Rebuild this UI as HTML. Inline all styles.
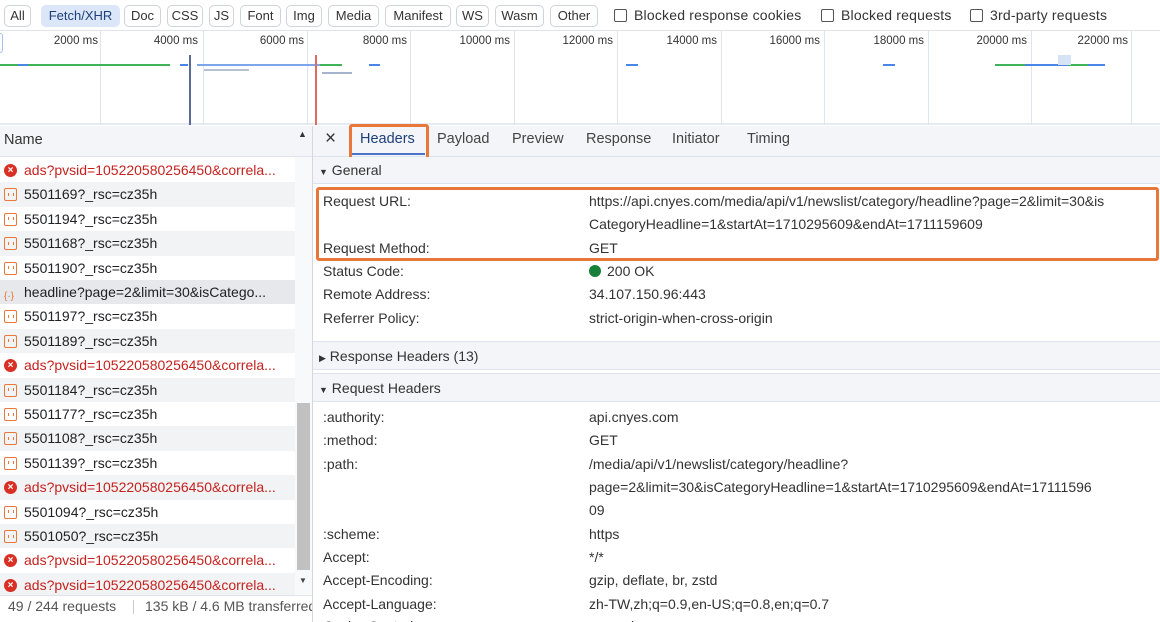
<!DOCTYPE html>
<html><head><meta charset="utf-8"><style>
*{box-sizing:border-box;margin:0;padding:0}
html,body{width:1160px;height:622px;overflow:hidden}
body{background:#fff;font-family:"Liberation Sans",sans-serif;font-size:13.5px;color:#202124;position:relative}
.abs{position:absolute}
.btn{position:absolute;top:5px;height:22px;border:1px solid #cfd3da;border-radius:5px;font-size:13px;line-height:20px;text-align:center;color:#333;white-space:nowrap}
.cb{position:absolute;top:9px;width:13px;height:13px;border:1px solid #555;border-radius:2px}
.lbl{position:absolute;top:7px;font-size:14px;color:#333;letter-spacing:0.2px}
.gl{position:absolute;top:31px;height:94px;width:1px;background:#dfe5f0}
.tl{position:absolute;top:35px;font-size:11.5px;color:#333;text-align:right;width:80px}
.bar{position:absolute;height:2px}
.row{position:absolute;left:0;width:295px;height:24.4px;line-height:24px;font-size:14px;padding-left:24px;white-space:nowrap;overflow:hidden}
.g{background:#f1f3f4}
.red{color:#c5221f}
.ic{position:absolute;left:4px;top:6px;width:13px;height:13px}
.err{border-radius:50%;background:#d93025;color:#fff;font-size:10px;line-height:13px;text-align:center;font-weight:bold}
.doc{border:1.5px solid #e8773a;border-radius:2px}
.doc:after{content:"";position:absolute;left:3px;top:3.5px;width:4px;height:3px;border-left:1px solid #e8773a;border-right:1px solid #e8773a}
.k{position:absolute;left:323px;font-size:14px;color:#333}
.v{position:absolute;left:589px;font-size:14px;color:#333;white-space:nowrap}
.sec{position:absolute;left:313px;width:847px;background:#f3f5f9;border-top:1px solid #dde3ee;border-bottom:1px solid #dde3ee;font-size:14px;color:#333;padding-left:6px}
.tab{position:absolute;top:131px;font-size:14.5px;color:#444}
</style></head><body>
<div class="abs" style="left:0;top:0;width:1160px;height:31px;border-bottom:1px solid #e0e4ea"></div>
<div class="btn" style="left:4px;width:27px">All</div>
<div class="btn" style="left:41px;width:79px;background:#dbe6f8;border-color:#dbe6f8;color:#1f3f7a">Fetch/XHR</div>
<div class="btn" style="left:124px;width:37px">Doc</div>
<div class="btn" style="left:167px;width:36px">CSS</div>
<div class="btn" style="left:209px;width:25px">JS</div>
<div class="btn" style="left:240px;width:41px">Font</div>
<div class="btn" style="left:286px;width:36px">Img</div>
<div class="btn" style="left:328px;width:51px">Media</div>
<div class="btn" style="left:385px;width:66px">Manifest</div>
<div class="btn" style="left:456px;width:33px">WS</div>
<div class="btn" style="left:495px;width:49px">Wasm</div>
<div class="btn" style="left:550px;width:48px">Other</div>
<div class="cb" style="left:614px"></div><div class="lbl" style="left:634px">Blocked response cookies</div>
<div class="cb" style="left:821px"></div><div class="lbl" style="left:841px">Blocked requests</div>
<div class="cb" style="left:970px"></div><div class="lbl" style="left:990px">3rd-party requests</div>
<div class="abs" style="left:0;top:31px;width:1160px;height:94px;background:#fff;border-bottom:2px solid #e6eaf2"></div>
<div class="gl" style="left:100px"></div><div class="gl" style="left:203px"></div><div class="gl" style="left:307px"></div><div class="gl" style="left:410px"></div><div class="gl" style="left:514px"></div><div class="gl" style="left:617px"></div><div class="gl" style="left:721px"></div><div class="gl" style="left:824px"></div><div class="gl" style="left:928px"></div><div class="gl" style="left:1031px"></div><div class="gl" style="left:1131px"></div>
<div class="tl" style="left:18px">2000 ms</div><div class="tl" style="left:118px">4000 ms</div><div class="tl" style="left:224px">6000 ms</div><div class="tl" style="left:327px">8000 ms</div><div class="tl" style="left:430px">10000 ms</div><div class="tl" style="left:533px">12000 ms</div><div class="tl" style="left:637px">14000 ms</div><div class="tl" style="left:740px">16000 ms</div><div class="tl" style="left:844px">18000 ms</div><div class="tl" style="left:947px">20000 ms</div><div class="tl" style="left:1048px">22000 ms</div>
<div class="abs" style="left:0;top:33px;width:3px;height:20px;border:1px solid #a8c0e8;border-left:none;border-radius:0 4px 4px 0"></div>
<div class="bar" style="left:0;top:64px;width:170px;background:#3eb35a"></div>
<div class="bar" style="left:18px;top:64px;width:10px;background:#4a86e8"></div>
<div class="bar" style="left:180px;top:64px;width:8px;background:#4a86e8"></div>
<div class="bar" style="left:197px;top:64px;width:140px;background:#5b8fe6;opacity:.8"></div>
<div class="bar" style="left:204px;top:69px;width:45px;background:#9aa7bd;opacity:.7"></div>
<div class="bar" style="left:320px;top:64px;width:22px;background:#3eb35a"></div>
<div class="bar" style="left:322px;top:72px;width:30px;background:#8ea0c0;opacity:.8"></div>
<div class="bar" style="left:369px;top:64px;width:11px;background:#4a86e8"></div>
<div class="bar" style="left:626px;top:64px;width:12px;background:#4a86e8"></div>
<div class="bar" style="left:883px;top:64px;width:12px;background:#4a86e8"></div>
<div class="bar" style="left:995px;top:64px;width:110px;background:#4a86e8"></div>
<div class="bar" style="left:995px;top:64px;width:30px;background:#3eb35a"></div>
<div class="bar" style="left:1068px;top:64px;width:20px;background:#3eb35a"></div>
<div class="abs" style="left:1058px;top:55px;width:13px;height:10px;background:#d6e2f6"></div>
<div class="abs" style="left:189px;top:55px;width:2px;height:70px;background:#5a6b9a"></div>
<div class="abs" style="left:315px;top:55px;width:2px;height:70px;background:#e06b5f"></div>
<div class="abs" style="left:0;top:126px;width:312px;height:31px;background:#f3f5f9;border-bottom:1px solid #e0e4ea"></div>
<div class="abs" style="left:4px;top:132px;font-size:14.5px;color:#333">Name</div>
<div class="abs" style="left:298px;top:129px;font-size:9px;color:#333">▲</div>
<div class="abs" style="left:312px;top:126px;width:1px;height:496px;background:#d4d8de"></div>
<div class="row" style="top:158px"><div class="ic err">×</div><span class="red">ads?pvsid=105220580256450&amp;correla...</span></div>
<div class="row g" style="top:182.4px"><div class="ic doc"></div>5501169?_rsc=cz35h</div>
<div class="row" style="top:206.8px"><div class="ic doc"></div>5501194?_rsc=cz35h</div>
<div class="row g" style="top:231.2px"><div class="ic doc"></div>5501168?_rsc=cz35h</div>
<div class="row" style="top:255.6px"><div class="ic doc"></div>5501190?_rsc=cz35h</div>
<div class="row" style="top:280px;background:#e6e8eb"><div class="ic" style="color:#e8773a;font-size:10px;top:5px">{·}</div>headline?page=2&amp;limit=30&amp;isCatego...</div>
<div class="row" style="top:304.4px"><div class="ic doc"></div>5501197?_rsc=cz35h</div>
<div class="row g" style="top:328.8px"><div class="ic doc"></div>5501189?_rsc=cz35h</div>
<div class="row" style="top:353.2px"><div class="ic err">×</div><span class="red">ads?pvsid=105220580256450&amp;correla...</span></div>
<div class="row g" style="top:377.6px"><div class="ic doc"></div>5501184?_rsc=cz35h</div>
<div class="row" style="top:402px"><div class="ic doc"></div>5501177?_rsc=cz35h</div>
<div class="row g" style="top:426.4px"><div class="ic doc"></div>5501108?_rsc=cz35h</div>
<div class="row" style="top:450.8px"><div class="ic doc"></div>5501139?_rsc=cz35h</div>
<div class="row g" style="top:475.2px"><div class="ic err">×</div><span class="red">ads?pvsid=105220580256450&amp;correla...</span></div>
<div class="row" style="top:499.6px"><div class="ic doc"></div>5501094?_rsc=cz35h</div>
<div class="row g" style="top:524px"><div class="ic doc"></div>5501050?_rsc=cz35h</div>
<div class="row" style="top:548.4px"><div class="ic err">×</div><span class="red">ads?pvsid=105220580256450&amp;correla...</span></div>
<div class="row g" style="top:572.8px;height:22px"><div class="ic err">×</div><span class="red">ads?pvsid=105220580256450&amp;correla...</span></div>
<div class="abs" style="left:295px;top:157px;width:17px;height:438px;background:#f8f9fa"></div>
<div class="abs" style="left:297px;top:403px;width:13px;height:167px;background:#c1c1c1"></div>
<div class="abs" style="left:299px;top:576px;font-size:8px;color:#444">▼</div>
<div class="abs" style="left:0;top:595px;width:312px;height:27px;background:#fff;border-top:1px solid #e0e4ea"></div>
<div class="abs" style="left:8px;top:598px;font-size:14px;color:#555;white-space:nowrap">49 / 244 requests</div>
<div class="abs" style="left:133px;top:600px;width:1px;height:14px;background:#ccc"></div>
<div class="abs" style="left:145px;top:598px;width:167px;overflow:hidden;font-size:14px;color:#555;white-space:nowrap">135 kB / 4.6 MB transferred</div>
<div class="abs" style="left:313px;top:126px;width:847px;height:31px;background:#f3f5f9;border-bottom:1px solid #dde3ee"></div>
<div class="abs" style="left:325px;top:128px;font-size:19px;color:#333">×</div>
<div class="tab" style="left:360px;color:#1f3f7a">Headers</div>
<div class="abs" style="left:351px;top:153px;width:74px;height:2px;background:#4a74c8"></div>
<div class="abs" style="left:349px;top:124px;width:80px;height:38px;border:3px solid #e8773a;border-radius:3px"></div>
<div class="tab" style="left:437px">Payload</div>
<div class="tab" style="left:512px">Preview</div>
<div class="tab" style="left:586px">Response</div>
<div class="tab" style="left:672px">Initiator</div>
<div class="tab" style="left:747px">Timing</div>
<div class="sec" style="top:157px;height:27px;line-height:26px;border-top:none"><span style="font-size:9px">▼</span> General</div>
<div class="k" style="top:193px">Request URL:</div>
<div class="v" style="top:193px;width:568px;overflow:hidden">https://api.cnyes.com/media/api/v1/newslist/category/headline?page=2&amp;limit=30&amp;is</div>
<div class="v" style="top:216px">CategoryHeadline=1&amp;startAt=1710295609&amp;endAt=1711159609</div>
<div class="k" style="top:240px">Request Method:</div><div class="v" style="top:240px">GET</div>
<div class="abs" style="left:316px;top:187px;width:843px;height:74px;border:3px solid #e8773a;border-radius:3px"></div>
<div class="k" style="top:263px">Status Code:</div>
<div class="v" style="top:263px"><span style="display:inline-block;width:12px;height:12px;border-radius:50%;background:#188038;vertical-align:-1px;margin-right:6px"></span>200 OK</div>
<div class="k" style="top:286px">Remote Address:</div><div class="v" style="top:286px">34.107.150.96:443</div>
<div class="k" style="top:310px">Referrer Policy:</div><div class="v" style="top:310px">strict-origin-when-cross-origin</div>
<div class="sec" style="top:341px;height:29px;line-height:28px"><span style="font-size:9px">▶</span> Response Headers (13)</div>
<div class="sec" style="top:373px;height:29px;line-height:28px"><span style="font-size:9px">▼</span> Request Headers</div>
<div class="k" style="top:409px">:authority:</div><div class="v" style="top:409px">api.cnyes.com</div>
<div class="k" style="top:432px">:method:</div><div class="v" style="top:432px">GET</div>
<div class="k" style="top:456px">:path:</div><div class="v" style="top:456px">/media/api/v1/newslist/category/headline?</div>
<div class="v" style="top:479px">page=2&amp;limit=30&amp;isCategoryHeadline=1&amp;startAt=1710295609&amp;endAt=17111596</div>
<div class="v" style="top:502px">09</div>
<div class="k" style="top:526px">:scheme:</div><div class="v" style="top:526px">https</div>
<div class="k" style="top:549px">Accept:</div><div class="v" style="top:549px">*/*</div>
<div class="k" style="top:572px">Accept-Encoding:</div><div class="v" style="top:572px">gzip, deflate, br, zstd</div>
<div class="k" style="top:596px">Accept-Language:</div><div class="v" style="top:596px">zh-TW,zh;q=0.9,en-US;q=0.8,en;q=0.7</div>
<div class="k" style="top:618px">Cache-Control:</div><div class="v" style="top:618px">no-cache</div>
</body></html>
